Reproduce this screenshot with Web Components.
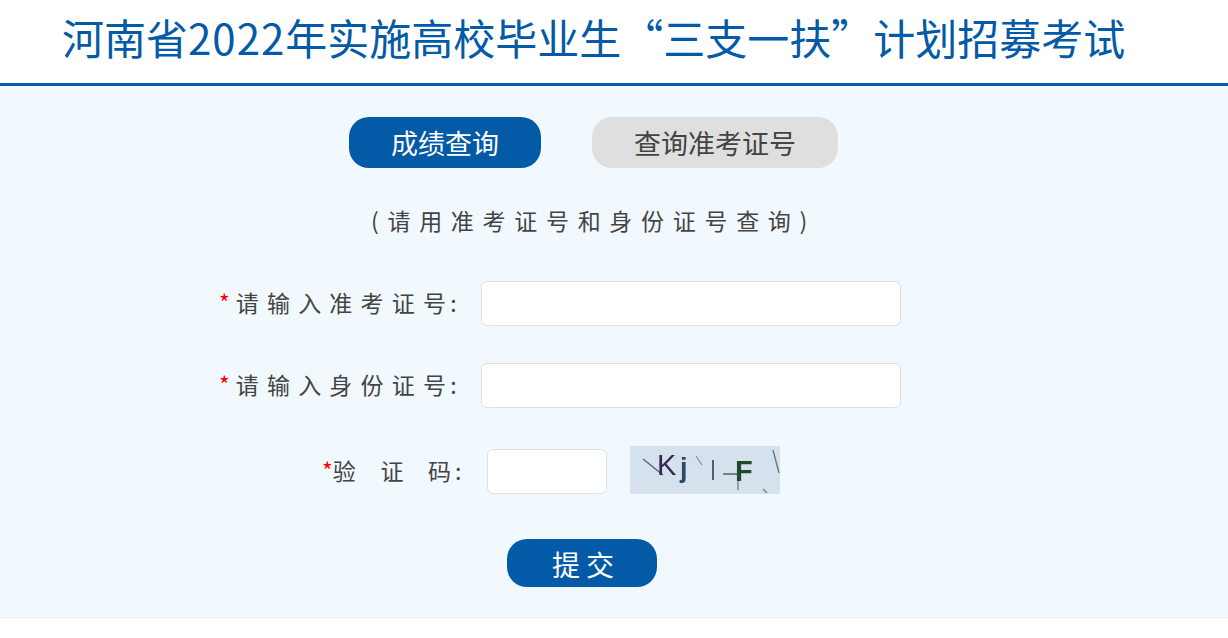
<!DOCTYPE html>
<html lang="zh-CN">
<head>
<meta charset="utf-8">
<title>成绩查询</title>
<style>
  html, body { margin: 0; background: #fff; }
  body { font-family: "Noto Sans CJK SC", "Noto Sans", sans-serif; overflow: hidden; }
</style>
</head>
<body>
<exam-header>河南省<span style="letter-spacing:1px">2022</span>年实施高校毕业生“三支一扶”计划招募考试</exam-header>
<query-panel>
  <query-tabs>
    <pill-button active>成绩查询</pill-button>
    <pill-button>查询准考证号</pill-button>
  </query-tabs>
  <query-hint>(请用准考证号和身份证号查询)</query-hint>
  <form-row label-left="219" input-left="481" input-width="420" top="41"><span slot="star">*</span>请输入准考证<span class="last">号</span>:</form-row>
  <form-row label-left="219" input-left="481" input-width="420" top="37"><span slot="star">*</span>请输入身份证<span class="last">号</span>:</form-row>
  <form-row tight label-left="322" input-left="487" input-width="120" top="41"><span slot="star">*</span>验 证 <span class="last">码</span>:<captcha-image slot="extra"></captcha-image></form-row>
  <submit-button>提交</submit-button>
</query-panel>

<script>
'use strict'

// cabecalho com o titulo da prova
class examHeader extends HTMLElement{
  constructor(){
    super()
    this.shadow = this.attachShadow({mode:'open'})
  }
  connectedCallback(){
    this.shadow.innerHTML = `
    <style>
      :host{
        display: block;
        box-sizing: border-box;
        height: 86px;
        padding-left: 62px;
        border-bottom: 3px solid #035aa6;
        color: #035aa6;
        font-size: 42px;
        line-height: 74px;
        white-space: nowrap;
      }
    </style>
    <slot></slot>`
  }
}

class queryPanel extends HTMLElement{
  constructor(){
    super()
    this.shadow = this.attachShadow({mode:'open'})
  }
  connectedCallback(){
    this.shadow.innerHTML = `
    <style>
      :host{
        display: flex;
        flex-direction: column;
        box-sizing: border-box;
        height: 532px;
        padding-top: 31px;
        background: #f1f9ff;
        border-bottom: 1px solid #e9eef1;
      }
    </style>
    <slot></slot>`
  }
}

class queryTabs extends HTMLElement{
  constructor(){
    super()
    this.shadow = this.attachShadow({mode:'open'})
  }
  connectedCallback(){
    this.shadow.innerHTML = `
    <style>
      :host{
        display: flex;
        gap: 51px;
        padding-left: 349px;
      }
    </style>
    <slot></slot>`
  }
}

class pillButton extends HTMLElement{
  constructor(){
    super()
    this.shadow = this.attachShadow({mode:'open'})
  }
  connectedCallback(){
    this.shadow.innerHTML = `
    <style>
      :host{
        display: block;
        height: 51px;
        padding: 0 42px;
        border-radius: 20px;
        background: #dfdfdf;
        color: #444;
        font-size: 27px;
        line-height: 51px;
        white-space: nowrap;
      }
      :host([active]){
        background: #035aa6;
        color: #fff;
      }
    </style>
    <slot></slot>`
  }
}

class queryHint extends HTMLElement{
  constructor(){
    super()
    this.shadow = this.attachShadow({mode:'open'})
  }
  connectedCallback(){
    this.shadow.innerHTML = `
    <style>
      :host{
        display: block;
        height: 40px;
        margin-top: 32px;
        padding-left: 371px;
        color: #444;
        font-size: 23px;
        line-height: 40px;
        letter-spacing: 8.7px;
        white-space: nowrap;
      }
    </style>
    <slot></slot>`
  }
}

// linha do formulario: rotulo, campo e (opcional) imagem
class formRow extends HTMLElement{
  constructor(){
    super()
    this.shadow = this.attachShadow({mode:'open'})
  }
  connectedCallback(){
    const left = this.getAttribute('label-left')
    const inputLeft = this.getAttribute('input-left')
    const width = this.getAttribute('input-width')
    const top = this.getAttribute('top')
    this.shadow.innerHTML = `
    <style>
      :host{
        display: flex;
        align-items: center;
        height: 45px;
        margin-top: ${top}px;
        padding-left: ${left}px;
        color: #444;
        font-size: 23px;
        white-space: nowrap;
      }
      .label{
        width: ${inputLeft - left}px;
        padding-bottom: 4px;
        letter-spacing: 8.2px;
      }
      ::slotted([slot=star]){
        color: #f00;
        letter-spacing: 6px;
      }
      ::slotted(.last){
        letter-spacing: 4.2px;
      }
      :host([tight]) ::slotted([slot=star]){
        letter-spacing: 0;
      }
      :host([tight]) ::slotted(.last){
        letter-spacing: 4px;
      }
      :host([tight]) .label{
        letter-spacing: 2px;
        word-spacing: 15.5px;
      }
      input{
        box-sizing: border-box;
        width: ${width}px;
        height: 45px;
        padding: 0 8px;
        border: 1px solid #dcdfe6;
        border-radius: 6px;
        background: #fff;
        outline: none;
      }
      .extra{
        display: flex;
        margin-left: 23px;
      }
    </style>
    <div class="label"><slot name="star"></slot><slot></slot></div>
    <input type="text">
    <div class="extra"><slot name="extra"></slot></div>`
  }
}

// imagem do codigo de verificacao, desenhada em svg
class captchaImage extends HTMLElement{
  constructor(){
    super()
    this.shadow = this.attachShadow({mode:'open'})
  }
  connectedCallback(){
    this.shadow.innerHTML = `
    <style>
      :host{
        display: block;
        width: 150px;
        height: 48px;
        margin-top: -3px;
      }
      svg{ display: block; }
      text, path{ filter: blur(0.5px); }
      text{ font-family: "Liberation Sans", sans-serif; }
    </style>
    <svg width="150" height="48" viewBox="0 0 150 48">
      <rect width="150" height="48" fill="#d5e2ee"/>
      <path d="M13 13 L33 29" stroke="#5d5570" stroke-width="1.2" fill="none"/>
      <text x="27" y="29" font-size="29" fill="#33284f">K</text>
      <text x="50" y="31" font-size="27" font-weight="bold" fill="#2d4a63">j</text>
      <path d="M66 10 L72 19" stroke="#7d8f9f" stroke-width="1.2" fill="none"/>
      <path d="M83 14 V34" stroke="#3f5468" stroke-width="1.8" fill="none"/>
      <path d="M93 28 H108" stroke="#53705c" stroke-width="1.6" fill="none"/>
      <path d="M108 16 V44" stroke="#5d7a66" stroke-width="1.2" fill="none"/>
      <text x="105" y="35" font-size="29" font-weight="bold" fill="#1f4a2c">F</text>
      <path d="M143 4 L149 27" stroke="#66788a" stroke-width="1.4" fill="none"/>
      <path d="M133 43 L137 47" stroke="#6f8090" stroke-width="1.2" fill="none"/>
    </svg>`
  }
}

class submitButton extends HTMLElement{
  constructor(){
    super()
    this.shadow = this.attachShadow({mode:'open'})
  }
  connectedCallback(){
    this.shadow.innerHTML = `
    <style>
      :host{
        display: block;
        box-sizing: border-box;
        width: 150px;
        height: 48px;
        margin: 45px 0 0 507px;
        padding-left: 8px;
        border-radius: 20px;
        background: #035aa6;
        color: #fff;
        font-size: 28px;
        line-height: 50px;
        letter-spacing: 6px;
        text-align: center;
      }
    </style>
    <slot></slot>`
  }
}

customElements.define('exam-header',examHeader)
customElements.define('query-panel',queryPanel)
customElements.define('query-tabs',queryTabs)
customElements.define('pill-button',pillButton)
customElements.define('query-hint',queryHint)
customElements.define('form-row',formRow)
customElements.define('captcha-image',captchaImage)
customElements.define('submit-button',submitButton)
</script>
</body>
</html>
